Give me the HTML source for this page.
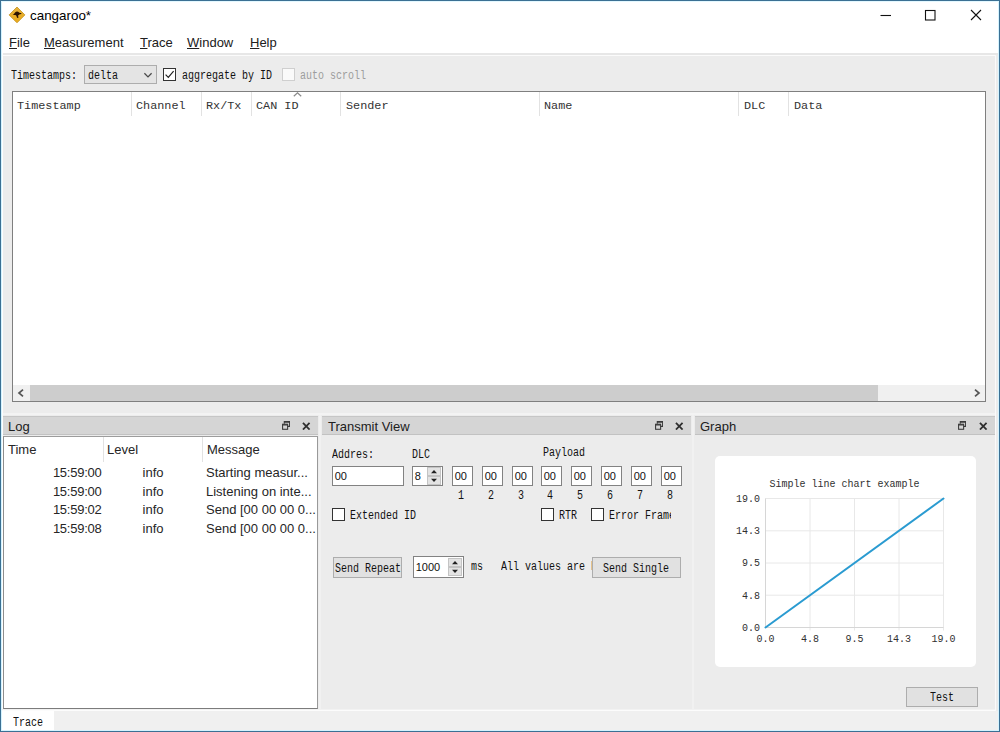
<!DOCTYPE html>
<html lang="en">
<head>
<meta charset="utf-8">
<title>cangaroo*</title>
<style>
*{box-sizing:border-box;margin:0;padding:0}
html,body{width:1000px;height:732px;overflow:hidden;background:#ececec}
body{position:relative;font-family:"Liberation Sans",sans-serif;font-size:13px;color:#1a1a1a}
.abs{position:absolute}
.ui{font-family:"Liberation Sans",sans-serif;color:#202020;white-space:nowrap}
.mono{font-family:"Liberation Mono",monospace;font-size:12px;color:#111;white-space:nowrap;transform:scaleX(0.833);transform-origin:0 0}
.cour{font-family:"Liberation Mono",monospace;font-size:11.8px;color:#333;white-space:nowrap}
.t{position:absolute;white-space:nowrap;line-height:1}
u{text-decoration:underline;text-underline-offset:1px}
/* window frame */
#bT{left:0;top:0;width:1000px;height:1px;background:#3b7093}
#bL{left:0;top:0;width:1px;height:732px;background:#3b7093}
#bL2{left:1px;top:1px;width:1px;height:730px;background:#d4f3ff}
#bR{left:999px;top:0;width:1px;height:732px;background:#3b7093}
#bR2{left:998px;top:1px;width:1px;height:730px;background:#d4f3ff}
#bB{left:0;top:731px;width:1000px;height:1px;background:#3b7093}
#bB2{left:1px;top:730px;width:998px;height:1px;background:#d4f3ff}
#bT2{left:1px;top:1px;width:998px;height:1px;background:#e3f8ff}
#titlebar{left:2px;top:1px;width:996px;height:52px;background:#fff}
#central{left:2px;top:53px;width:996px;height:677px;background:#ececec}
.dock{position:absolute;height:19px;top:416px;background:#d5d5d5;border-top:1px solid #c6c6c6;border-bottom:1px solid #c2c2c2}
.frame{position:absolute;background:#fff;border:1px solid #7f7f7f}
.hsep{position:absolute;width:1px;background:#e2e2e2}
.edit{position:absolute;background:#fff;border:1px solid #828282;height:20px;top:466px}
.edit span{position:absolute;left:1.7px;top:4px;font-size:11px;line-height:1;color:#111}
.cb{position:absolute;width:13px;height:13px;background:#fff;border:1px solid #333}
.btn{position:absolute;background:#e1e1e1;border:1px solid #adadad;overflow:hidden;text-align:center}
.lg{font-size:13px;color:#262626}
.r{text-align:right}
.c{text-align:center}
</style>
</head>
<body>
<div class="abs" id="titlebar"></div>
<div class="abs" id="central"></div>
<div class="abs" id="bT"></div><div class="abs" id="bL"></div><div class="abs" id="bL2"></div>
<div class="abs" id="bR"></div><div class="abs" id="bR2"></div><div class="abs" id="bB"></div><div class="abs" id="bB2"></div><div class="abs" id="bT2"></div>

<!-- title -->
<svg class="abs" id="appicon" style="left:8px;top:6px" width="18" height="18" viewBox="8 6 18 18"><defs><linearGradient id="gy" x1="0" y1="0" x2="0" y2="1"><stop offset="0" stop-color="#e6b23a"/><stop offset="1" stop-color="#eaa916"/></linearGradient></defs><polygon points="17,7 24.9,14.9 17,22.8 9.1,14.9" fill="url(#gy)" stroke="#c79a2e" stroke-width="0.9" stroke-linejoin="round"/><path d="M12.7 15.1 C13.8 14.5 14.5 13.2 15.3 12.3 C16.2 11.3 18 11.3 18.8 12.3 C19.4 12.9 20.2 13.1 21.2 13.1 L21.5 13.8 C20.7 14.3 19.9 14.4 19.2 14.4 L18.9 15.3 L18.2 15.1 C18 16 18.1 16.9 18.6 17.5 L17.1 17.9 C16.9 16.9 16.6 16.1 16.2 15.4 C15.3 14.9 14.2 14.8 12.7 15.1 Z" fill="#2b1300"/></svg>

<div class="t ui" id="title" style="left:30px;top:9px;font-size:13.4px;color:#000">cangaroo*</div>

<!-- menu -->
<div class="t ui" id="m1" style="left:9px;top:36px;font-size:13px"><u>F</u>ile</div>
<div class="t ui" id="m2" style="left:44px;top:36px;font-size:13px"><u>M</u>easurement</div>
<div class="t ui" id="m3" style="left:140px;top:36px;font-size:13px"><u>T</u>race</div>
<div class="t ui" id="m4" style="left:187px;top:36px;font-size:13px"><u>W</u>indow</div>
<div class="t ui" id="m5" style="left:250px;top:36px;font-size:13px"><u>H</u>elp</div>


<div class="abs" style="left:2px;top:53px;width:996px;height:2px;background:#e7e7e7"></div>
<div class="abs" style="left:3px;top:55px;width:993px;height:1px;background:#fbfbfb"></div>
<!-- window buttons -->
<svg class="abs" style="left:876px;top:5px" width="112" height="20" viewBox="876 5 112 20"><path d="M880.5 15.5 H891" stroke="#111" stroke-width="1.1" fill="none"/><rect x="925.5" y="10.5" width="9.5" height="9.5" fill="none" stroke="#111" stroke-width="1.1"/><path d="M971 10 L981 20 M981 10 L971 20" stroke="#111" stroke-width="1.1" fill="none"/></svg>
<!-- filter row -->
<div class="t mono" id="ts" style="left:11px;top:70px">Timestamps:</div>
<div class="abs" id="combo" style="left:84px;top:65px;width:73px;height:19px;background:#e4e4e4;border:1px solid #adadad"></div>
<div class="t mono" id="delta" style="left:88px;top:70px">delta</div>
<svg class="abs" style="left:143.3px;top:72.4px" width="10" height="7" viewBox="0 0 10 7"><path d="M1.4 1.2 L5 4.9 L8.6 1.2" fill="none" stroke="#4a4a4a" stroke-width="1.25"/></svg>
<div class="cb" id="cb1" style="left:163px;top:68px"></div>
<svg class="abs" style="left:163px;top:68px" width="13" height="13" viewBox="0 0 13 13"><path d="M2.6 6.6 L5.3 9.3 L10.6 3.2" fill="none" stroke="#222" stroke-width="1.2"/></svg>
<div class="t mono" id="agg" style="left:182px;top:70px">aggregate by ID</div>
<div class="cb" id="cb2" style="left:282px;top:68px;border-color:#cfcfcf;background:#fafafa"></div>
<div class="t mono" id="asc" style="left:300px;top:70px;color:#9d9d9d">auto scroll</div>

<!-- trace table -->
<div class="frame" id="trace" style="left:12px;top:91px;width:974px;height:311px"></div>
<div class="t cour" style="left:17px;top:101px">Timestamp</div>
<div class="t cour" style="left:136px;top:101px">Channel</div>
<div class="t cour" style="left:206px;top:101px">Rx/Tx</div>
<div class="t cour" style="left:256px;top:101px">CAN ID</div>
<div class="t cour" style="left:346px;top:101px">Sender</div>
<div class="t cour" style="left:544px;top:101px">Name</div>
<div class="t cour" style="left:744px;top:101px">DLC</div>
<div class="t cour" style="left:794px;top:101px">Data</div>
<div class="hsep" style="left:131px;top:92px;height:24px"></div>
<div class="hsep" style="left:201px;top:92px;height:24px"></div>
<div class="hsep" style="left:251px;top:92px;height:24px"></div>
<div class="hsep" style="left:340px;top:92px;height:24px"></div>
<div class="hsep" style="left:539px;top:92px;height:24px"></div>
<div class="hsep" style="left:738px;top:92px;height:24px"></div>
<div class="hsep" style="left:788px;top:92px;height:24px"></div>
<svg class="abs" style="left:293px;top:92px" width="9" height="5" viewBox="0 0 9 5"><path d="M0.8 4.2 L4.5 0.8 L8.2 4.2" fill="none" stroke="#8a8a8a" stroke-width="1.2"/></svg>
<!-- h scrollbar -->
<div class="abs" id="hsb" style="left:13px;top:385px;width:972px;height:16px;background:#f0f0f0"></div>
<div class="abs" id="thumb" style="left:30px;top:385px;width:848px;height:16px;background:#cdcdcd"></div>
<svg class="abs" style="left:17px;top:387.5px" width="8" height="10" viewBox="0 0 8 10"><path d="M6 1.6 L2 5 L6 8.4" fill="none" stroke="#555" stroke-width="1.7"/></svg>
<svg class="abs" style="left:972.5px;top:387.5px" width="8" height="10" viewBox="0 0 8 10"><path d="M2 1.6 L6 5 L2 8.4" fill="none" stroke="#555" stroke-width="1.7"/></svg>

<!-- dock titles -->
<div class="abs" style="left:2px;top:53px;width:1px;height:677px;background:#fdfdfd"></div>
<div class="abs" style="left:3px;top:413px;width:992px;height:2px;background:#f3f3f3"></div>
<div class="dock" id="dk1" style="left:3px;width:315px"></div>
<div class="dock" id="dk2" style="left:322px;width:369px"></div>
<div class="dock" id="dk3" style="left:695px;width:300px"></div>
<div class="t ui" id="dt1" style="left:8px;top:420px;font-size:13px">Log</div>
<div class="t ui" id="dt2" style="left:328px;top:420px;font-size:13px">Transmit View</div>
<div class="t ui" id="dt3" style="left:700px;top:420px;font-size:13px">Graph</div>
<svg class="abs" style="left:282px;top:421px" width="8.2" height="9" viewBox="0 0 9 10"><path d="M2.5 3 V0.6 H8.4 V6 H6.2" fill="none" stroke="#3a3a3a" stroke-width="1.2"/><rect x="0.6" y="3.6" width="5.6" height="5.6" fill="none" stroke="#3a3a3a" stroke-width="1.2"/><path d="M0.6 4.4 H6.2 M2.5 1.3 H8.4" stroke="#3a3a3a" stroke-width="1.4"/></svg><svg class="abs" style="left:302px;top:421.5px" width="8.5" height="8.5" viewBox="0 0 9 9"><path d="M1 1 L8 8 M8 1 L1 8" fill="none" stroke="#2e2e2e" stroke-width="1.9"/></svg><svg class="abs" style="left:655px;top:421px" width="8.2" height="9" viewBox="0 0 9 10"><path d="M2.5 3 V0.6 H8.4 V6 H6.2" fill="none" stroke="#3a3a3a" stroke-width="1.2"/><rect x="0.6" y="3.6" width="5.6" height="5.6" fill="none" stroke="#3a3a3a" stroke-width="1.2"/><path d="M0.6 4.4 H6.2 M2.5 1.3 H8.4" stroke="#3a3a3a" stroke-width="1.4"/></svg><svg class="abs" style="left:675px;top:421.5px" width="8.5" height="8.5" viewBox="0 0 9 9"><path d="M1 1 L8 8 M8 1 L1 8" fill="none" stroke="#2e2e2e" stroke-width="1.9"/></svg><svg class="abs" style="left:958px;top:421px" width="8.2" height="9" viewBox="0 0 9 10"><path d="M2.5 3 V0.6 H8.4 V6 H6.2" fill="none" stroke="#3a3a3a" stroke-width="1.2"/><rect x="0.6" y="3.6" width="5.6" height="5.6" fill="none" stroke="#3a3a3a" stroke-width="1.2"/><path d="M0.6 4.4 H6.2 M2.5 1.3 H8.4" stroke="#3a3a3a" stroke-width="1.4"/></svg><svg class="abs" style="left:979px;top:421.5px" width="8.5" height="8.5" viewBox="0 0 9 9"><path d="M1 1 L8 8 M8 1 L1 8" fill="none" stroke="#2e2e2e" stroke-width="1.9"/></svg>
<div class="abs" style="left:319px;top:415px;width:2px;height:295px;background:#f1f1f1"></div>
<div class="abs" style="left:692px;top:415px;width:2px;height:295px;background:#f1f1f1"></div>
<!-- log -->
<div class="frame" id="log" style="left:3px;top:436px;width:315px;height:273px;border-color:#9c9c9c #999 #7c7c7c #8e8e8e"></div>
<div class="hsep" style="left:103px;top:437px;height:25px"></div>
<div class="hsep" style="left:202px;top:437px;height:25px"></div>
<div class="t ui lg" style="left:8px;top:443px">Time</div>
<div class="t ui lg" style="left:107px;top:443px">Level</div>
<div class="t ui lg" style="left:207px;top:443px">Message</div>
<div class="t ui lg r" style="letter-spacing:-0.25px;left:3px;width:98.5px;top:465.5px">15:59:00</div>
<div class="t ui lg r" style="letter-spacing:-0.25px;left:3px;width:98.5px;top:484.5px">15:59:00</div>
<div class="t ui lg r" style="letter-spacing:-0.25px;left:3px;width:98.5px;top:503px">15:59:02</div>
<div class="t ui lg r" style="letter-spacing:-0.25px;left:3px;width:98.5px;top:522px">15:59:08</div>
<div class="t ui lg c" style="left:103px;width:100px;top:465.5px">info</div>
<div class="t ui lg c" style="left:103px;width:100px;top:484.5px">info</div>
<div class="t ui lg c" style="left:103px;width:100px;top:503px">info</div>
<div class="t ui lg c" style="left:103px;width:100px;top:522px">info</div>
<div class="t ui lg" style="left:206px;top:465.5px">Starting measur...</div>
<div class="t ui lg" style="left:206px;top:484.5px">Listening on inte...</div>
<div class="t ui lg" style="left:206px;top:503px">Send [00 00 00 0...</div>
<div class="t ui lg" style="left:206px;top:522px">Send [00 00 00 0...</div>

<!-- transmit view -->
<div class="t mono" style="left:332px;top:449px">Addres:</div>
<div class="t mono" style="left:412px;top:449px">DLC</div>
<div class="t mono" style="left:543px;top:447px">Payload</div>
<div class="edit" id="addr" style="left:332px;width:72px"><span>00</span></div>
<div class="edit" id="dlc" style="left:412px;width:31px"><span>8</span></div>
<svg class="abs" style="left:427px;top:467px" width="14" height="18" viewBox="0 0 14 18"><rect x="0.5" y="0.5" width="13" height="8" fill="#e3e3e3" stroke="#c4c4c4"/><rect x="0.5" y="9.5" width="13" height="8" fill="#e3e3e3" stroke="#c4c4c4"/><path d="M4 6.2 L7 3 L10 6.2 Z M4 11.8 L7 15 L10 11.8 Z" fill="#222"/></svg>
<div class="edit" style="left:452px;width:21px"><span>00</span></div>
<div class="t mono" style="left:457.8px;top:490px">1</div>
<div class="edit" style="left:482px;width:21px"><span>00</span></div>
<div class="t mono" style="left:487.8px;top:490px">2</div>
<div class="edit" style="left:512px;width:21px"><span>00</span></div>
<div class="t mono" style="left:517.8px;top:490px">3</div>
<div class="edit" style="left:541px;width:21px"><span>00</span></div>
<div class="t mono" style="left:546.8px;top:490px">4</div>
<div class="edit" style="left:571px;width:21px"><span>00</span></div>
<div class="t mono" style="left:576.8px;top:490px">5</div>
<div class="edit" style="left:601px;width:21px"><span>00</span></div>
<div class="t mono" style="left:606.8px;top:490px">6</div>
<div class="edit" style="left:631px;width:21px"><span>00</span></div>
<div class="t mono" style="left:636.8px;top:490px">7</div>
<div class="edit" style="left:661px;width:21px"><span>00</span></div>
<div class="t mono" style="left:666.8px;top:490px">8</div>
<div class="cb" style="left:332px;top:508px"></div>
<div class="t mono" style="left:350px;top:510px">Extended ID</div>
<div class="cb" style="left:541px;top:508px"></div>
<div class="t mono" style="left:559px;top:510px">RTR</div>
<div class="cb" style="left:591px;top:508px"></div>
<div class="abs" style="left:609px;top:506px;width:62px;height:18px;overflow:hidden"><div class="t mono" style="left:0;top:4px">Error Frame</div></div>
<div class="btn" id="srep" style="left:333px;top:557px;width:69px;height:21px"><div class="t mono" style="left:1px;top:5px">Send Repeat</div></div>
<div class="edit" id="ms" style="left:413px;top:556px;width:51px;height:22px"><span style="top:5px">1000</span></div>
<svg class="abs" style="left:448px;top:558px" width="14" height="18" viewBox="0 0 14 18"><rect x="0.5" y="0.5" width="13" height="8" fill="#e3e3e3" stroke="#c4c4c4"/><rect x="0.5" y="9.5" width="13" height="8" fill="#e3e3e3" stroke="#c4c4c4"/><path d="M4 6.2 L7 3 L10 6.2 Z M4 11.8 L7 15 L10 11.8 Z" fill="#222"/></svg>
<div class="t mono" style="left:471px;top:561px">ms</div>
<div class="abs" style="left:501px;top:556px;width:92px;height:18px;overflow:hidden"><div class="t mono" style="left:0;top:5px">All values are hexadecimal</div></div>
<div class="btn" id="ssing" style="left:592px;top:557px;width:89px;height:21px"><div class="t mono" style="left:10px;top:5px">Send Single</div></div>

<!-- graph -->
<svg class="abs" id="chart" style="left:715px;top:456px" width="261" height="211" viewBox="715 456 261 211">
<rect x="715" y="456" width="261" height="211" rx="5" ry="5" fill="#fff"/>
<line x1="765.5" y1="498.5" x2="765.5" y2="627.5" stroke="#e8e8e8" stroke-width="1"/>
<line x1="810.0" y1="498.5" x2="810.0" y2="630.5" stroke="#e8e8e8" stroke-width="1"/>
<line x1="854.5" y1="498.5" x2="854.5" y2="630.5" stroke="#e8e8e8" stroke-width="1"/>
<line x1="899.0" y1="498.5" x2="899.0" y2="630.5" stroke="#e8e8e8" stroke-width="1"/>
<line x1="943.5" y1="498.5" x2="943.5" y2="630.5" stroke="#e8e8e8" stroke-width="1"/>
<line x1="765.5" y1="498.5" x2="943.5" y2="498.5" stroke="#e8e8e8" stroke-width="1"/>
<line x1="765.5" y1="530.8" x2="943.5" y2="530.8" stroke="#e8e8e8" stroke-width="1"/>
<line x1="765.5" y1="563.0" x2="943.5" y2="563.0" stroke="#e8e8e8" stroke-width="1"/>
<line x1="765.5" y1="595.2" x2="943.5" y2="595.2" stroke="#e8e8e8" stroke-width="1"/>
<line x1="765.5" y1="627.5" x2="943.5" y2="627.5" stroke="#e8e8e8" stroke-width="1"/>
<line x1="765.5" y1="498.5" x2="765.5" y2="627.5" stroke="#d6d6d6" stroke-width="1"/>
<line x1="765.5" y1="627.5" x2="943.5" y2="627.5" stroke="#d6d6d6" stroke-width="1"/>
<line x1="765.5" y1="627.5" x2="943.5" y2="498.5" stroke="#2a9bd1" stroke-width="2" stroke-linecap="round"/>
<g font-family="Liberation Mono, monospace" font-size="11.6" fill="#303030">
<text x="769.5" y="487" textLength="150" lengthAdjust="spacingAndGlyphs">Simple line chart example</text>
<text x="736.0" y="501.9" textLength="24" lengthAdjust="spacingAndGlyphs">19.0</text>
<text x="736.0" y="534.2" textLength="24" lengthAdjust="spacingAndGlyphs">14.3</text>
<text x="742.0" y="566.4" textLength="18" lengthAdjust="spacingAndGlyphs">9.5</text>
<text x="742.0" y="598.6" textLength="18" lengthAdjust="spacingAndGlyphs">4.8</text>
<text x="742.0" y="630.9" textLength="18" lengthAdjust="spacingAndGlyphs">0.0</text>
<text x="756.5" y="642.3" textLength="18" lengthAdjust="spacingAndGlyphs">0.0</text>
<text x="801.0" y="642.3" textLength="18" lengthAdjust="spacingAndGlyphs">4.8</text>
<text x="845.5" y="642.3" textLength="18" lengthAdjust="spacingAndGlyphs">9.5</text>
<text x="887.0" y="642.3" textLength="24" lengthAdjust="spacingAndGlyphs">14.3</text>
<text x="931.5" y="642.3" textLength="24" lengthAdjust="spacingAndGlyphs">19.0</text>
</g>
</svg>
<div class="btn" id="test" style="left:906px;top:687px;width:72px;height:20px"><div class="t mono" style="left:23px;top:4px">Test</div></div>
<!-- bottom -->
<div class="abs" id="dockline" style="left:2px;top:709px;width:994px;height:2px;background:linear-gradient(#f2f2f2 50%,#fcfcfc 50%)"></div>
<div class="abs" id="rline" style="left:995px;top:55px;width:1px;height:656px;background:#fafafa"></div>
<div class="abs" id="status" style="left:2px;top:711px;width:996px;height:19px;background:#f0f0f0"></div>
<div class="abs" id="tab" style="left:2px;top:711px;width:52px;height:19px;background:#fff"></div>
<div class="t mono" style="left:12.7px;top:716.5px">Trace</div>

</body>
</html>
